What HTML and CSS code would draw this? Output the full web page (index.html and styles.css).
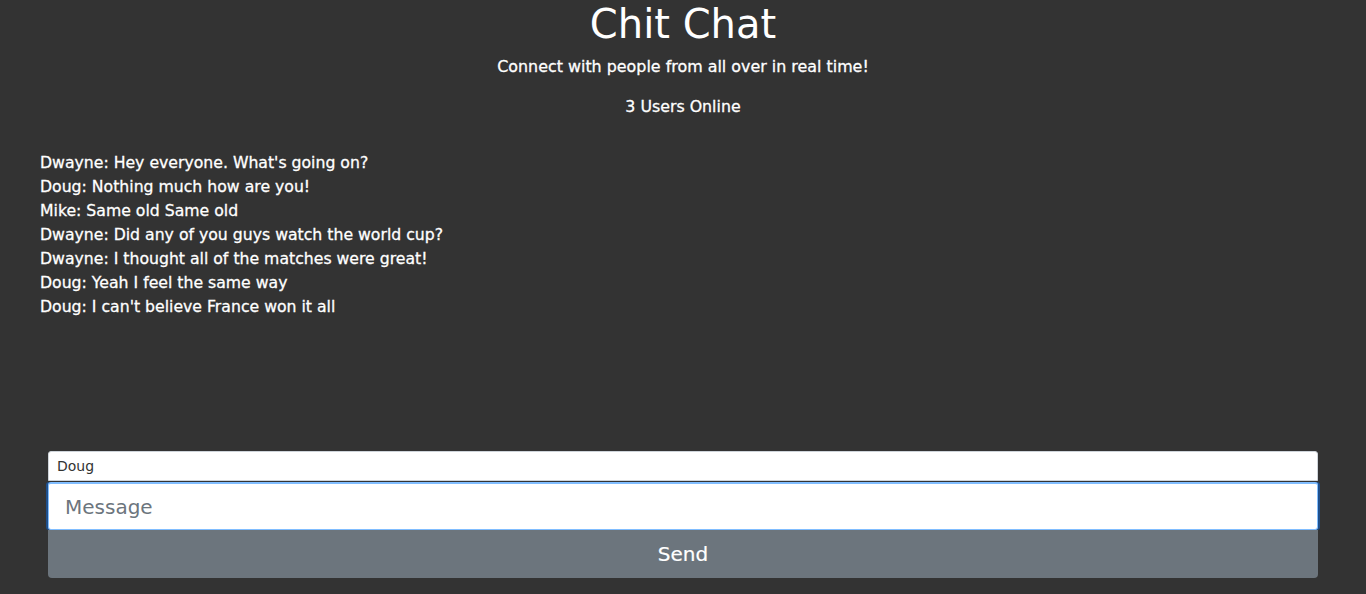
FILE: index.html
```html
<!DOCTYPE html>
<html>
<head>
<meta charset="utf-8">
<link rel="stylesheet" href="styles.css">
</head>
<body>
<div class="page">
  <header class="header">
    <h1 class="title">Chit Chat</h1>
    <p class="subtitle">Connect with people from all over in real time!</p>
    <p class="online">3 Users Online</p>
  </header>
  <div class="messages">
    <div class="msg">Dwayne: Hey everyone. What's going on?</div>
    <div class="msg">Doug: Nothing much how are you!</div>
    <div class="msg">Mike: Same old Same old</div>
    <div class="msg">Dwayne: Did any of you guys watch the world cup?</div>
    <div class="msg">Dwayne: I thought all of the matches were great!</div>
    <div class="msg">Doug: Yeah I feel the same way</div>
    <div class="msg">Doug: I can't believe France won it all</div>
  </div>
  <form class="compose">
    <input class="name-input" type="text" value="Doug">
    <input class="message-input" type="text" placeholder="Message">
    <button class="send" type="button">Send</button>
  </form>
</div>
</body>
</html>
```
FILE: styles.css
```css
html, body {
  margin: 0;
  padding: 0;
  background: #333333;
  height: 100%;
}
body {
  font-family: "DejaVu Sans", sans-serif;
  color: #ffffff;
}
.page {
  display: flex;
  flex-direction: column;
  height: 594px;
}
.header {
  text-align: center;
}
.title {
  margin: 0;
  padding-top: 2px;
  font-size: 40px;
  font-weight: 400;
  line-height: 44px;
}
.subtitle {
  margin: 10px 0 0;
  font-size: 15.9px;
  line-height: 22px;
  -webkit-text-stroke: 0.3px #ffffff;
}
.online {
  margin: 18px 0 0;
  font-size: 15.8px;
  line-height: 22px;
  -webkit-text-stroke: 0.3px #ffffff;
}
.messages {
  flex: 0 0 auto;
  padding: 33px 40px 0;
  height: 333px;
  box-sizing: border-box;
}
.msg {
  font-size: 15.7px;
  line-height: 24px;
  -webkit-text-stroke: 0.3px #ffffff;
}
.compose {
  margin: 0 48px;
  display: flex;
  flex-direction: column;
}
.name-input {
  height: 30px;
  box-sizing: border-box;
  border: 1px solid #ced4da;
  border-radius: 3px 3px 0 0;
  padding: 0 8px;
  font-family: inherit;
  font-size: 14px;
  color: #333;
  background: #fff;
}
.message-input {
  margin-top: 1px;
  height: 48px;
  box-sizing: border-box;
  border: 1px solid #80bdff;
  border-top: 2px solid #80bdff;
  border-radius: 3px;
  box-shadow: -2px 0 0 #1f4f8a, 2px 0 0 #1f4f8a;
  padding: 0 16px;
  font-family: inherit;
  font-size: 20px;
  background: #fff;
  outline: none;
}
.message-input::placeholder {
  color: #6c757d;
}
.send {
  height: 48px;
  border: none;
  border-radius: 0 0 4px 4px;
  background: #6c757d;
  color: #fff;
  font-family: inherit;
  font-size: 20px;
  -webkit-text-stroke: 0.2px #ffffff;
}
```
